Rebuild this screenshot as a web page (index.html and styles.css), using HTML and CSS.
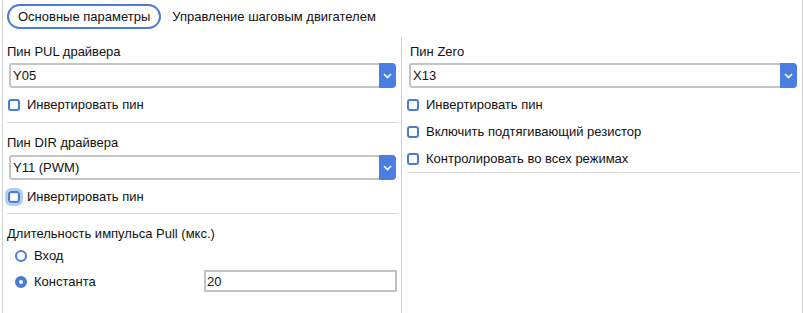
FILE: index.html
```html
<!DOCTYPE html>
<html lang="ru">
<head>
    <meta charset="UTF-8">
    <title>Параметры</title>
    <link rel="stylesheet" href="styles.css">
</head>
<body>
    <div class="page">
        <div class="tabs">
            <div class="tab active">Основные параметры</div>
            <div class="tab">Управление шаговым двигателем</div>
        </div>
        <div class="columns">
            <div class="col col-left">
                <div class="group g1">
                    <div class="label">Пин PUL драйвера</div>
                    <div class="select"><div class="select-value">Y05</div><div class="select-btn"><svg width="9" height="6" viewBox="0 0 9 6"><polyline points="1,1 4.5,4.5 8,1" fill="none" stroke="#fff" stroke-width="1.6"/></svg></div></div>
                    <div class="check"><span class="box"></span>Инвертировать пин</div>
                </div>
                <div class="group g2">
                    <div class="label">Пин DIR драйвера</div>
                    <div class="select"><div class="select-value">Y11 (PWM)</div><div class="select-btn"><svg width="9" height="6" viewBox="0 0 9 6"><polyline points="1,1 4.5,4.5 8,1" fill="none" stroke="#fff" stroke-width="1.6"/></svg></div></div>
                    <div class="check"><span class="box focus"></span>Инвертировать пин</div>
                </div>
                <div class="group g3">
                    <div class="label">Длительность импульса Pull (мкс.)</div>
                    <div class="radio"><span class="dot"></span>Вход</div>
                    <div class="radio radio-const"><span class="dot on"></span><span class="radio-text">Константа</span><input class="num" type="text" value="20"></div>
                </div>
            </div>
            <div class="col col-right">
                <div class="group gr">
                    <div class="label">Пин Zero</div>
                    <div class="select"><div class="select-value">X13</div><div class="select-btn"><svg width="9" height="6" viewBox="0 0 9 6"><polyline points="1,1 4.5,4.5 8,1" fill="none" stroke="#fff" stroke-width="1.6"/></svg></div></div>
                    <div class="check"><span class="box"></span>Инвертировать пин</div>
                    <div class="check"><span class="box"></span>Включить подтягивающий резистор</div>
                    <div class="check"><span class="box"></span>Контролировать во всех режимах</div>
                </div>
            </div>
        </div>
    </div>
</body>
</html>
```

FILE: styles.css
```css
* { box-sizing: border-box; }
body {
    margin: 0; padding: 0 1px 0 2px;
    font-family: "Liberation Sans", Arial, sans-serif; font-size: 13px; color: #111;
    background: #fff;
}
.page {
    height: 313px;
    border-left: 1px solid #d0d0d0; border-right: 1px solid #d0d0d0;
}
.tabs { display: flex; align-items: flex-start; padding: 4px 0 0 4px; height: 37px; }
.tab { height: 25px; line-height: 21px; padding: 0 9px; border: 2px solid transparent; white-space: nowrap; }
.tab.active { border-color: #4a7bd8; border-radius: 13px; }

.columns { display: grid; grid-template-columns: 399px 1fr; height: 276px; }
.col-left { border-right: 1px solid #d0d0d0; }

.group { margin: 0 3px 0 4px; border-bottom: 1px solid #d6d6d6; }
.col-right .group { margin-left: 5px; }
.g1 { padding-top: 7px; padding-bottom: 10px; }
.g2 { padding-top: 12px; padding-bottom: 9px; }
.g3 { padding-top: 12px; border-bottom: none; }
.gr { padding-top: 7px; padding-bottom: 6px; }

.label { height: 16px; line-height: 16px; }
.col-right .label { padding-left: 3px; }
.select { display: flex; height: 25px; margin: 3px 2px 0; }
.g2 .select { margin-top: 4px; }
.select-value {
    flex: 1; border: 2px solid #c4c4c4; border-right: none; border-radius: 3px 0 0 3px;
    padding-left: 2px; line-height: 21px;
}
.select-btn {
    width: 17px; background: #4a7ee0; border-radius: 0 4px 4px 0;
    display: flex; align-items: center; justify-content: center;
}
.select-btn svg { display: block; }

.check { display: flex; align-items: center; height: 16px; margin-top: 8px; }
.col-left .check { padding-left: 1px; }
.check + .check { margin-top: 11px; }
.box {
    width: 12px; height: 12px; margin-right: 7px; margin-top: 2px;
    border: 2px solid #4a7bd8; border-radius: 3px; background: #fff;
}
.box.focus { outline: 3px solid #b3cdf3; box-shadow: inset 0 0 0 1px #e6eefb; }

.radio { display: flex; align-items: center; height: 16px; margin-top: 5px; padding-left: 8px; }
.radio-const { height: 22px; margin-top: 7px; }
.dot {
    width: 12px; height: 12px; margin-right: 7px; margin-top: 2px;
    border: 2px solid #4a7bd8; border-radius: 50%; background: #fff;
}
.dot.on { background: #4a7bd8; position: relative; }
.dot.on::after {
    content: ""; position: absolute; left: 2px; top: 2px; width: 4px; height: 4px;
    border-radius: 50%; background: #fff;
}
.radio-text { width: 170px; }
.num {
    width: 193px; height: 22px; border: 2px solid #c2c2c2; padding: 0 1px;
    font: inherit; color: #111; outline: none;
}
```
